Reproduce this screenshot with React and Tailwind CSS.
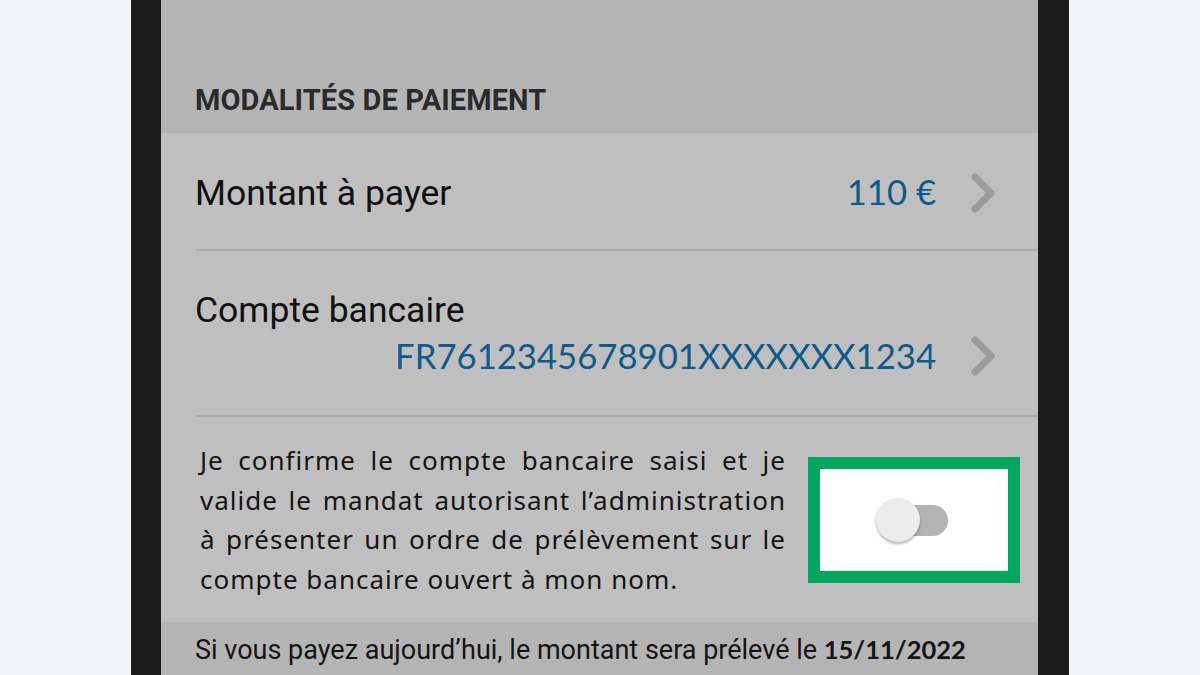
import React from "react";

function Chevron() {
  return (
    <svg width="30" height="44" viewBox="0 0 30 44" className="shrink-0">
      <path d="M7 6 L23 22 L7 38" fill="none" stroke="#9b9b9b" strokeWidth="7" strokeLinecap="round" strokeLinejoin="round" />
    </svg>
  );
}

export default function App() {
  const roboto = { fontFamily: "Roboto, 'Liberation Sans', sans-serif" };
  const src = { fontFamily: "Lato, 'Noto Sans', sans-serif" };
  const noto = { fontFamily: "'Noto Sans', 'Open Sans', sans-serif" };
  return (
    <div className="w-[1200px] h-[675px] bg-[#f2f4f9] flex justify-center overflow-hidden">
      <div className="w-[938px] h-full bg-[#1b1b1b] pl-[30px] pr-[31px] flex">
        <div className="flex-1 flex flex-col bg-[#bfbfbf]">
          {/* header */}
          <div className="h-[133px] shrink-0 bg-[#b4b4b4] flex items-end pl-[34px] pb-[18px]">
            <div className="text-[29px] font-bold text-[#2b2b2b] leading-none tracking-[0.1px]" style={roboto}>
              MODALITÉS DE PAIEMENT
            </div>
          </div>
          {/* row 1 */}
          <div className="h-[116px] shrink-0 flex items-center pl-[34px] pr-[40px] pt-[3px]">
            <div className="flex-1 text-[35.5px] text-[#111] leading-none pt-[2px]" style={roboto}>Montant à payer</div>
            <div className="text-[34.7px] text-[#0f5a8a] leading-none mr-[32px]" style={src}>110 €</div>
            <Chevron />
          </div>
          <div className="h-[2px] ml-[35px] bg-[#a9a9a9] shrink-0" />
          {/* row 2 */}
          <div className="h-[164px] shrink-0 flex flex-col justify-center pl-[34px] pr-[40px] pt-[2px] pb-[2px]">
            <div className="text-[35.5px] text-[#111] leading-[44px]" style={roboto}>Compte bancaire</div>
            <div className="flex items-center justify-end mt-[2px]">
              <div className="text-[34.7px] text-[#0f5a8a] leading-[44px] mr-[32px]" style={src}>FR7612345678901XXXXXXX1234</div>
              <Chevron />
            </div>
          </div>
          <div className="h-[2px] ml-[35px] bg-[#a9a9a9] shrink-0" />
          {/* row 3 */}
          <div className="h-[205px] shrink-0 flex items-start pl-[39px] pr-[18px] pt-[24px]">
            <div className="w-[586px] text-[26px] text-[#141414] leading-[39.5px] tracking-[1px]" style={noto}>
              <div className="text-justify [text-align-last:justify]">Je confirme le compte bancaire saisi et je</div>
              <div className="text-justify [text-align-last:justify]">valide le mandat autorisant l’administration</div>
              <div className="text-justify [text-align-last:justify]">à présenter un ordre de prélèvement sur le</div>
              <div>compte bancaire ouvert à mon nom.</div>
            </div>
            <div className="ml-[22px] mt-[16px] w-[212px] h-[126px] border-[12px] border-[#02a65f] bg-white flex items-center justify-center">
              <div className="relative w-[72px] h-[44px] ml-[-4px]">
                <div className="absolute right-0 top-[6.5px] w-[58px] h-[31px] rounded-full bg-[#b3b3b3]" />
                <div className="absolute left-0 top-0 w-[44px] h-[44px] rounded-full bg-[#ececec] shadow-[0_2px_3px_rgba(0,0,0,0.3)]" />
              </div>
            </div>
          </div>
          {/* bottom band */}
          <div className="flex-1 bg-[#b4b4b4] pl-[34px] pt-[15px]">
            <div className="text-[27px] text-[#141414] leading-none whitespace-nowrap" style={roboto}>
              Si vous payez aujourd’hui, le montant sera prélevé le{" "}
              <span className="font-bold text-[25.5px]" style={src}>15/11/2022</span>
            </div>
          </div>
        </div>
      </div>
    </div>
  );
}
